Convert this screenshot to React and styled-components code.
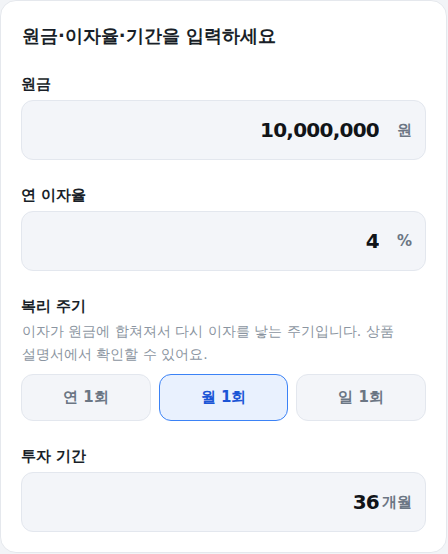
import React, { useState } from "react";
import styled, { createGlobalStyle } from "styled-components";

const Global = createGlobalStyle`
  html, body { margin: 0; padding: 0; background: #f2f4f7; }
  body { font-family: "DejaVu Sans", sans-serif; }
  * { box-sizing: border-box; }
`;

const Card = styled.div`
  width: 447px;
  background: #ffffff;
  border: 1px solid #e5e8ed;
  border-radius: 16px;
  padding: 22px 20px 20px;
  display: flex;
  flex-direction: column;
`;

const Title = styled.h2`
  margin: 0 0 25px;
  font-size: 18px;
  line-height: 26px;
  font-weight: 700;
  color: #191f28;
  padding-left: 1px;
`;

const Fields = styled.div`
  display: flex;
  flex-direction: column;
  gap: 25px;
`;

const Field = styled.div`
  display: flex;
  flex-direction: column;
`;

const Label = styled.div`
  font-size: 15px;
  line-height: 20px;
  font-weight: 700;
  color: #191f28;
  margin-bottom: ${(p) => (p.$tight ? "4px" : "6px")};
`;

const Description = styled.p`
  margin: 0 0 9px;
  font-size: 14px;
  line-height: 22.5px;
  color: #8b95a1;
  padding-left: 1px;
`;

const InputBox = styled.div`
  height: 60px;
  background: #f3f5f9;
  border: 1px solid #e3e7ee;
  border-radius: 12px;
  display: flex;
  align-items: center;
  padding: 0 13px 0 16px;
  gap: 3px;
`;

const Value = styled.input`
  flex: 1;
  min-width: 0;
  border: none;
  background: transparent;
  outline: none;
  text-align: right;
  font-family: inherit;
  font-size: 20px;
  font-weight: 700;
  letter-spacing: -0.75px;
  color: #111418;
  padding: 0;
`;

const Unit = styled.span`
  width: 30px;
  text-align: right;
  font-size: 15px;
  font-weight: 600;
  color: #6b7684;
  white-space: nowrap;
`;

const Segments = styled.div`
  display: grid;
  grid-template-columns: repeat(3, 1fr);
  gap: 8px;
`;

const Segment = styled.button`
  height: 47px;
  border-radius: 12px;
  border: 1px solid ${(p) => (p.$active ? "#3b82f6" : "#e3e7ee")};
  background: ${(p) => (p.$active ? "#e9f1fe" : "#f3f5f9")};
  color: ${(p) => (p.$active ? "#1b55d6" : "#6b7684")};
  font-family: inherit;
  font-size: 15px;
  font-weight: 700;
  cursor: pointer;
  padding: 0;
`;

export default function App() {
  const [cycle, setCycle] = useState("월 1회");
  return (
    <>
      <Global />
      <Card>
        <Title>원금·이자율·기간을 입력하세요</Title>
        <Fields>
          <Field>
            <Label>원금</Label>
            <InputBox>
              <Value defaultValue="10,000,000" />
              <Unit>원</Unit>
            </InputBox>
          </Field>
          <Field>
            <Label>연 이자율</Label>
            <InputBox>
              <Value defaultValue="4" />
              <Unit>%</Unit>
            </InputBox>
          </Field>
          <Field>
            <Label $tight>복리 주기</Label>
            <Description>
              이자가 원금에 합쳐져서 다시 이자를 낳는 주기입니다. 상품
              <br />
              설명서에서 확인할 수 있어요.
            </Description>
            <Segments>
              {["연 1회", "월 1회", "일 1회"].map((c) => (
                <Segment key={c} $active={cycle === c} onClick={() => setCycle(c)}>
                  {c}
                </Segment>
              ))}
            </Segments>
          </Field>
          <Field>
            <Label>투자 기간</Label>
            <InputBox>
              <Value defaultValue="36" />
              <Unit>개월</Unit>
            </InputBox>
          </Field>
        </Fields>
      </Card>
    </>
  );
}
